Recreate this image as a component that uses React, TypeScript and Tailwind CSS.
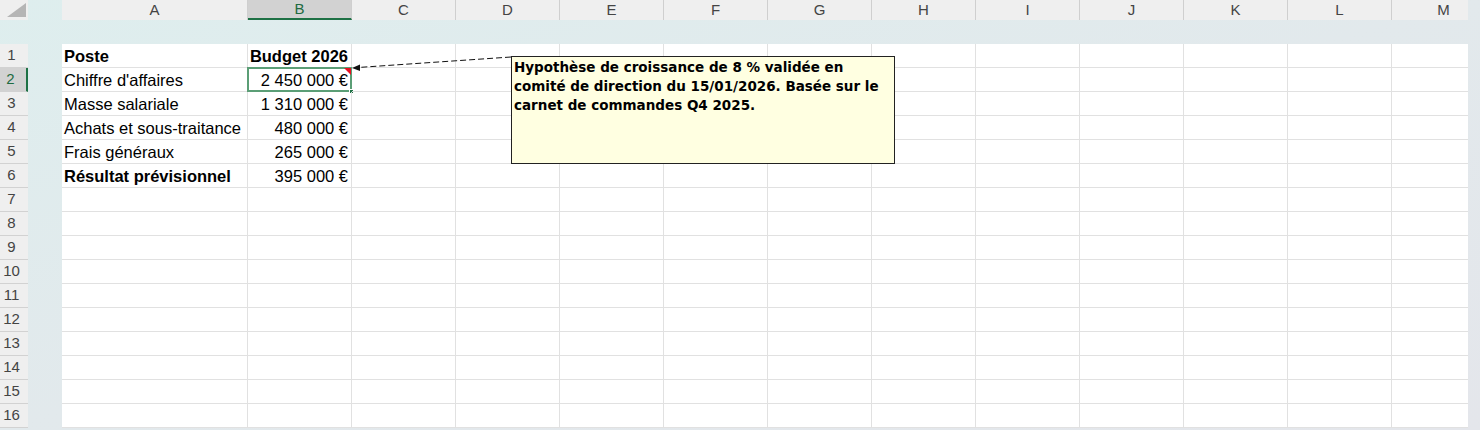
import React from 'react';

const columns = ['A', 'B', 'C', 'D', 'E', 'F', 'G', 'H', 'I', 'J', 'K', 'L', 'M'];
const colWidth = (c: string) => (c === 'A' ? 'w-[186px]' : 'w-[104px]');

interface Row {
  label: string;
  value: string;
  boldLabel?: boolean;
  boldValue?: boolean;
}

const data: Row[] = [
  { label: 'Poste', value: 'Budget 2026', boldLabel: true, boldValue: true },
  { label: "Chiffre d'affaires", value: '2 450 000 €' },
  { label: 'Masse salariale', value: '1 310 000 €' },
  { label: 'Achats et sous-traitance', value: '480 000 €' },
  { label: 'Frais généraux', value: '265 000 €' },
  { label: 'Résultat prévisionnel', value: '395 000 €', boldLabel: true },
];

const rowNumbers = Array.from({ length: 16 }, (_, i) => i + 1);

export default function App() {
  return (
    <div
      className="relative w-[1480px] h-[430px] overflow-hidden bg-gradient-to-br from-[#deeeee] via-[#e2e9ec] to-[#e4e6eb] text-[#222]"
      style={{ fontFamily: '"Liberation Sans", Arial, sans-serif' }}
    >
      {/* column headers */}
      <div className="flex h-[20px]">
        <div className="w-[28px] h-[20px] bg-[#efefef] flex items-end justify-end">
          <svg width="28" height="20" viewBox="0 0 28 20">
            <polygon points="7,17 26,17 26,3" fill="#b5b5b5" />
          </svg>
        </div>
        <div className="w-[34px]" />
        <div className="flex w-[1406px] overflow-hidden bg-[#efefef]">
          {columns.map((c) => (
            <div
              key={c}
              className={`${colWidth(c)} shrink-0 h-[20px] flex items-center justify-center text-[15px] border-r border-[#cfcfcf] ${
                c === 'B'
                  ? 'bg-[#d2d2d2] text-[#1e6b41] border-b-2 border-b-[#1e7145]'
                  : 'text-[#444]'
              }`}
            >
              {c}
            </div>
          ))}
        </div>
      </div>

      <div className="h-[24px]" />

      {/* body */}
      <div className="flex">
        <div className="w-[28px] flex flex-col bg-[#efefef]">
          {rowNumbers.map((n) => (
            <div
              key={n}
              className={`h-[24px] flex items-center justify-center pr-[5px] text-[15px] border-b border-[#d2d2d2] ${
                n === 2
                  ? 'bg-[#d2d2d2] text-[#1e6b41] border-r-2 border-r-[#1e7145]'
                  : 'text-[#444]'
              }`}
            >
              {n}
            </div>
          ))}
        </div>
        <div className="w-[34px]" />

        <div className="relative w-[1406px] bg-white overflow-hidden">
          {rowNumbers.map((n) => {
            const row = data[n - 1];
            return (
              <div key={n} className="flex h-[24px]">
                {columns.map((c) => {
                  let content: React.ReactNode = null;
                  let align = 'justify-start pl-[2px]';
                  let bold = false;
                  if (row && c === 'A') {
                    content = row.label;
                    bold = !!row.boldLabel;
                  }
                  if (row && c === 'B') {
                    content = row.value;
                    bold = !!row.boldValue;
                    align = 'justify-end pr-[3px]';
                  }
                  const selected = n === 2 && c === 'B';
                  return (
                    <div
                      key={c}
                      className={`${colWidth(c)} shrink-0 h-[24px] relative flex items-center pt-[2px] ${align} text-[16.5px] text-black border-r border-b border-[#e1e1e1] whitespace-nowrap ${
                        bold ? 'font-bold' : ''
                      }`}
                    >
                      {content}
                      {selected && (
                        <>
                          <div className="absolute -left-px -top-px w-[105px] h-[25px] border-2 border-[#5b9e76]" />
                          <div className="absolute right-0 top-0 w-0 h-0 border-t-[7px] border-t-[#e81123] border-l-[7px] border-l-transparent" />
                          <div className="absolute -right-[3px] -bottom-[3px] w-[5px] h-[5px] bg-[#1e7145] border border-white" />
                        </>
                      )}
                    </div>
                  );
                })}
              </div>
            );
          })}

          {/* comment */}
          <div className="absolute left-[449px] top-[12px] w-[384px] h-[108px] bg-[#ffffe1] border border-[#222] pl-[2px] pt-[1px]">
            <div
              className="font-bold text-[13.5px] leading-[19px] text-black whitespace-nowrap"
              style={{ fontFamily: '"DejaVu Sans", Verdana, sans-serif' }}
            >
              <div>Hypothèse de croissance de 8 % validée en</div>
              <div>comité de direction du 15/01/2026. Basée sur le</div>
              <div>carnet de commandes Q4 2025.</div>
            </div>
          </div>
        </div>
      </div>

      {/* comment arrow */}
      <svg className="absolute left-0 top-0 pointer-events-none" width="1480" height="430">
        <line x1="511" y1="57" x2="358" y2="67.5" stroke="#111" strokeWidth="1" strokeDasharray="6 3" />
        <polygon points="352,68 360,64.5 360,71" fill="#111" />
      </svg>
    </div>
  );
}
